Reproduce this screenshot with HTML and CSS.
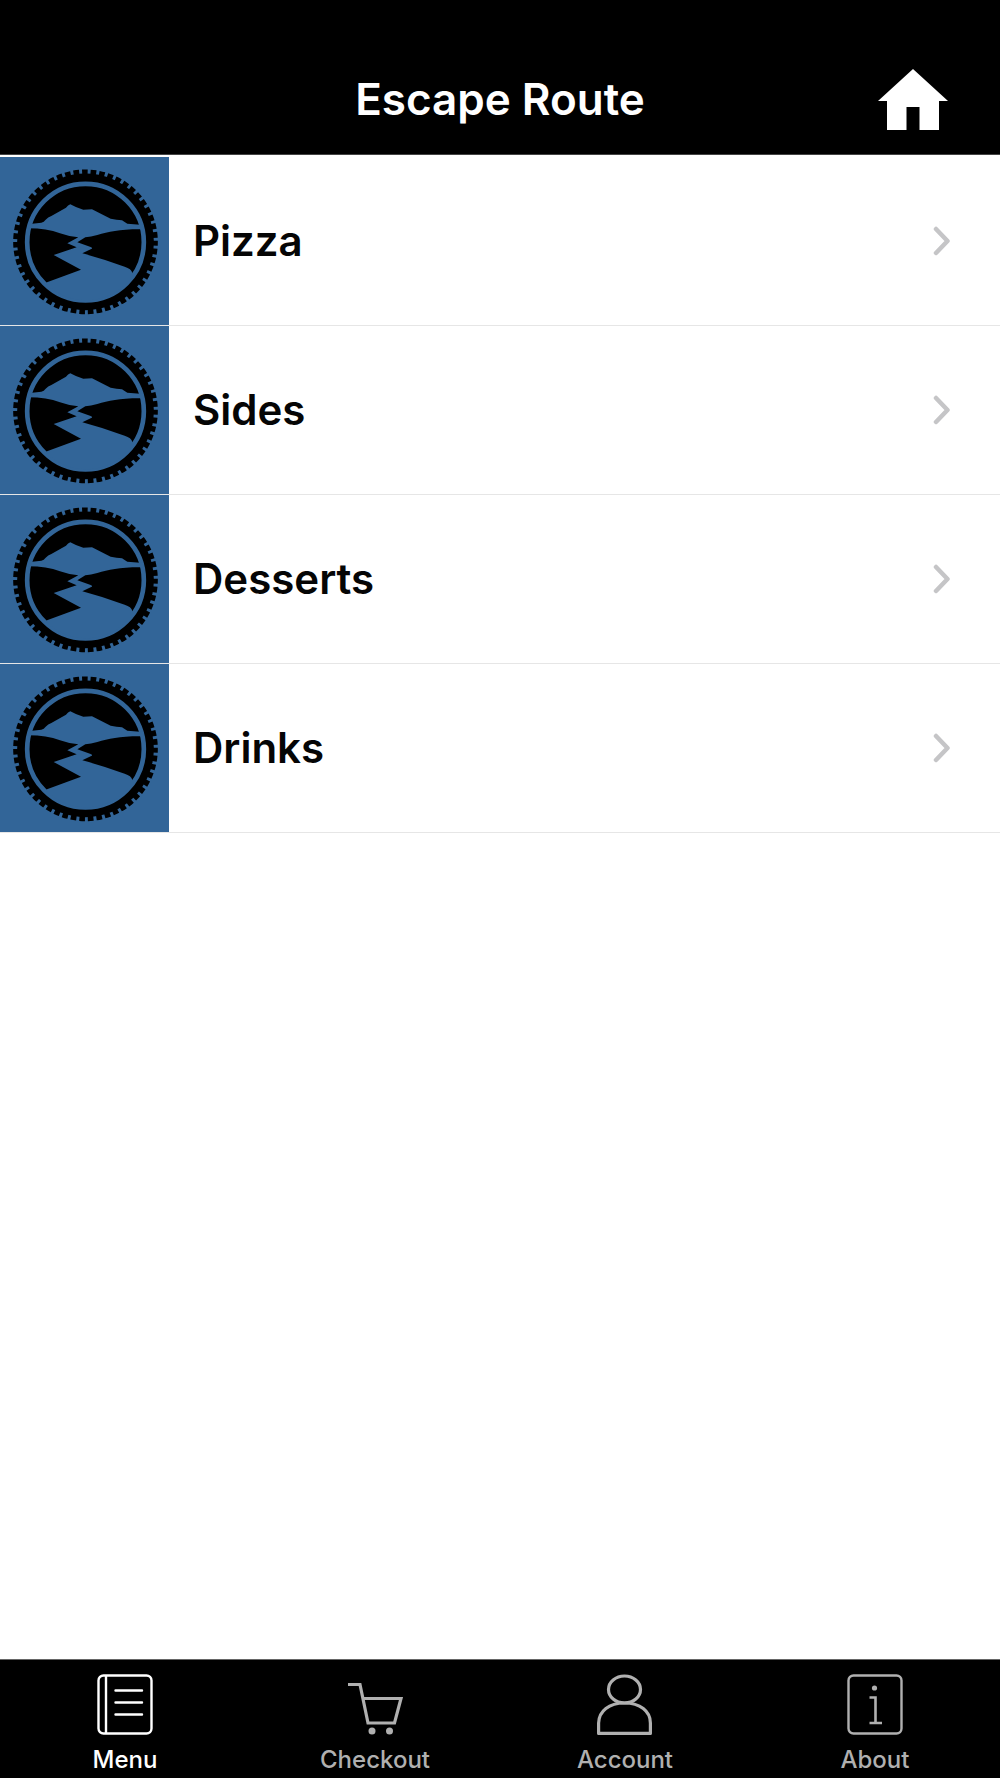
FILE: index.html
```html
<!DOCTYPE html>
<html lang="en">
<head>
<meta charset="utf-8">
<meta name="viewport" content="width=device-width, initial-scale=1">
<title>Escape Route</title>
<link rel="stylesheet" href="styles.css">
</head>
<body>
<svg class="defs" aria-hidden="true">
  <symbol id="badge" viewBox="0 36 507 507">
    <circle cx="256.500" cy="290.500" r="205" fill="#000"/>
    <circle cx="256.500" cy="290.500" r="208" fill="none" stroke="#000" stroke-width="18" pathLength="510" stroke-dasharray="6.600 3.400" stroke-dashoffset="2"/>
    <circle cx="256.500" cy="291.500" r="175" fill="none" stroke="#326598" stroke-width="14"/>
    <path fill="#326598" d="M90 237 L124 233 Q132 231 137 224 Q144 217 154 213 L198 188 Q204 180 211 178 Q230 189 250 194 L276 193 L332 221 Q350 225 366 226 Q374 231 382 236 L430 240 V253 C360 252 328 260 292 270 Q272 275 256 277 L232 292 L270 305 Q282 310 272 313 L247 325 Q310 342 374 365 Q394 371 397 384 L401 391 A172 172 0 0 1 138 416 L141 412 L243 374 L161 330 L230 307 L202 295 L235 277 Q204 274 180 265 Q140 250 85 250 Z"/>
  </symbol>
  <symbol id="chevron" viewBox="0 0 18 30">
    <path d="M3 3 L14.500 15 L3 27" fill="none" stroke="#c5c5c7" stroke-width="4.500" stroke-linecap="round" stroke-linejoin="round"/>
  </symbol>
</svg>

<header class="header">
  <h1 class="title">Escape Route</h1>
  <a class="home" href="#" aria-label="Home">
    <svg width="70" height="61" viewBox="0 0 70 61" aria-hidden="true"><path fill="#fff" d="M35 0 L70 32 H61 V61 H41.500 V38 H28.500 V61 H9 V32 H0 Z"/></svg>
  </a>
</header>

<main class="main">
  <ul class="list">
    <li><a class="row" href="#"><span class="thumb"><svg class="badge" aria-hidden="true"><use href="#badge"/></svg></span><span class="name">Pizza</span><svg class="chevron" aria-hidden="true"><use href="#chevron"/></svg></a></li>
    <li><a class="row" href="#"><span class="thumb"><svg class="badge" aria-hidden="true"><use href="#badge"/></svg></span><span class="name">Sides</span><svg class="chevron" aria-hidden="true"><use href="#chevron"/></svg></a></li>
    <li><a class="row" href="#"><span class="thumb"><svg class="badge" aria-hidden="true"><use href="#badge"/></svg></span><span class="name">Desserts</span><svg class="chevron" aria-hidden="true"><use href="#chevron"/></svg></a></li>
    <li><a class="row" href="#"><span class="thumb"><svg class="badge" aria-hidden="true"><use href="#badge"/></svg></span><span class="name">Drinks</span><svg class="chevron" aria-hidden="true"><use href="#chevron"/></svg></a></li>
  </ul>
</main>

<nav class="tabs" aria-label="Main">
  <a class="tab active" href="#" aria-current="page">
    <svg class="icon" viewBox="0 0 56 61" aria-hidden="true"><rect x="1.500" y="1.500" width="53" height="58" rx="5"/><path d="M9 1.500 V59.500"/><path stroke-linecap="round" d="M18.500 16.500 H45 M18.500 28.500 H45 M18.500 40.500 H45"/></svg>
    Menu
  </a>
  <a class="tab" href="#">
    <svg class="icon" viewBox="0 0 56 61" aria-hidden="true"><path stroke-width="3.200" d="M1 10.500 H13 L21 49 H47.500 L54 24.500 H16"/><circle class="solid" cx="25" cy="57" r="3.500"/><circle class="solid" cx="42.500" cy="57" r="3.500"/></svg>
    Checkout
  </a>
  <a class="tab" href="#">
    <svg class="icon" viewBox="0 0 56 61" aria-hidden="true"><ellipse stroke-width="3.200" cx="27.500" cy="15.500" rx="16" ry="13.500"/><path stroke-width="3.200" stroke-linejoin="round" d="M1.600 59.400 V49 C2 37 12 29 27.500 29 C43 29 53.400 37 53.400 49 V59.400 Z"/></svg>
    Account
  </a>
  <a class="tab" href="#">
    <svg class="icon" viewBox="0 0 56 61" aria-hidden="true"><rect x="1.500" y="1.500" width="53" height="58" rx="5"/><circle class="solid" cx="27.500" cy="14" r="2.600"/><path stroke-width="2.600" d="M22.500 23.500 H28.500 V49 M22.500 49 H35"/></svg>
    About
  </a>
</nav>
</body>
</html>
```
FILE: styles.css
```css
* {
  box-sizing: border-box;
}

body {
  margin: 0;
  min-height: 100vh;
  display: flex;
  flex-direction: column;
  background: #fff;
  font-family: Inter, "Liberation Sans", sans-serif;
}

a {
  color: inherit;
  text-decoration: none;
}

svg {
  display: block;
}

.defs {
  display: none;
}

.header {
  display: grid;
  grid-template-columns: 1fr auto 1fr;
  align-items: center;
  padding: 44px 52px 0;
  height: 155px;
  background: #000;
  border-bottom: 1px solid #444;
}

.title {
  grid-column: 2;
  margin: 0;
  color: #fff;
  font-size: 44px;
  line-height: 56px;
  font-weight: 600;
}

.home {
  justify-self: end;
}

.main {
  flex: 1;
  padding-top: 2px;
}

.list {
  margin: 0;
  padding: 0;
  list-style: none;
}

.row {
  display: flex;
  align-items: center;
  height: 169px;
  padding-right: 49px;
  border-bottom: 1px solid #e6e6e6;
}

.thumb {
  width: 169px;
  height: 168px;
  background: #326598;
}

.badge {
  width: 169px;
  height: 169px;
}

.name {
  flex: 1;
  padding-left: 24px;
  color: #050505;
  font-size: 42px;
  line-height: 50px;
  font-weight: 600;
}

.chevron {
  width: 18px;
  height: 30px;
}

.tabs {
  display: grid;
  grid-template-columns: repeat(4, 1fr);
  height: 119px;
  padding-top: 14px;
  background: #000;
  border-top: 1px solid #666;
}

.tab {
  display: flex;
  flex-direction: column;
  align-items: center;
  gap: 10px;
  color: #b0b0b0;
  font-size: 24px;
  line-height: 30px;
  font-weight: 500;
}

.tab.active {
  color: #fff;
}

.icon {
  width: 56px;
  height: 61px;
  fill: none;
  stroke: currentColor;
  stroke-width: 2.4px;
}

.solid {
  fill: currentColor;
  stroke: none;
}
```
